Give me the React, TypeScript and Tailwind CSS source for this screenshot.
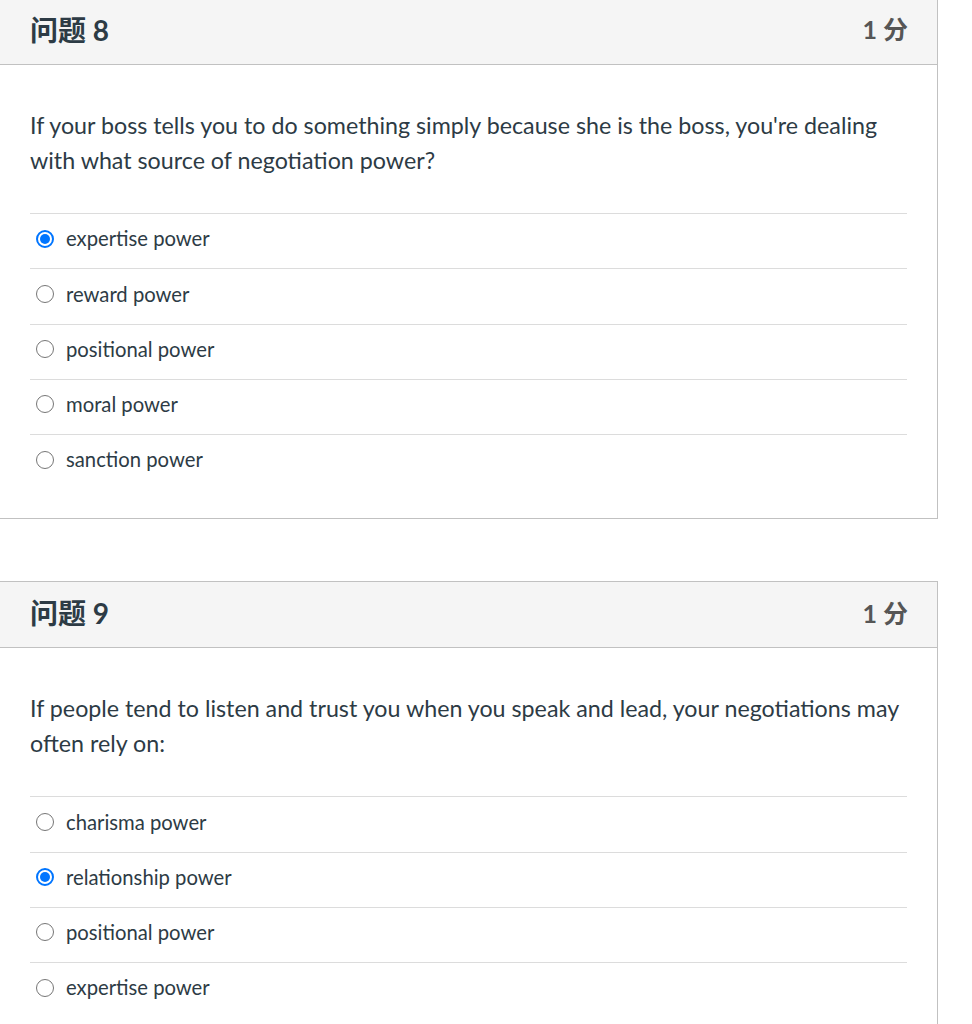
import React from 'react';

// Datos de las preguntas (tal como aparecen en la captura)
const questions = [
  {
    id: 8,
    points: '1 分',
    text: "If your boss tells you to do something simply because she is the boss, you're dealing with what source of negotiation power?",
    answers: ['expertise power', 'reward power', 'positional power', 'moral power', 'sanction power'],
    selected: 0,
  },
  {
    id: 9,
    points: '1 分',
    text: 'If people tend to listen and trust you when you speak and lead, your negotiations may often rely on:',
    answers: ['charisma power', 'relationship power', 'positional power', 'expertise power'],
    selected: 1,
  },
];

function Radio({ checked }: { checked: boolean }) {
  if (checked) {
    return (
      <span className="flex h-[18px] w-[18px] shrink-0 items-center justify-center rounded-full border-2 border-[#0075ff] bg-white">
        <span className="h-[10px] w-[10px] rounded-full bg-[#0075ff]" />
      </span>
    );
  }
  return <span className="h-[18px] w-[18px] shrink-0 rounded-full border-[1.5px] border-[#767676] bg-white" />;
}

function QuestionCard({ q, className }: { q: (typeof questions)[number]; className?: string }) {
  return (
    <div className={`border border-[#c1c1c1] bg-white ${className ?? ''}`}>
      {/* Cabecera */}
      <div className="flex h-[66px] items-center justify-between border-b border-[#c1c1c1] bg-[#f5f5f5] pb-[3px] pl-[30px] pr-[29px]">
        <span className="text-[28px] font-bold text-[#2d3b45]">问题 {q.id}</span>
        <span className="text-[25px] font-bold text-[#565656]">{q.points}</span>
      </div>

      {/* Cuerpo */}
      <div className="px-[30px] pb-[29px] pt-[43px]">
        <p className="text-[23.25px] leading-[34.5px] text-[#2d3b45]">{q.text}</p>
        <div className="mt-[36px]">
          {q.answers.map((a, i) => (
            <div key={a} className="flex h-[55.25px] items-center gap-[12px] border-t border-[#dcdcdc] pb-[5px] pl-[6px]">
              <Radio checked={i === q.selected} />
              <span className="text-[20.25px] text-[#2d3b45]">{a}</span>
            </div>
          ))}
        </div>
      </div>
    </div>
  );
}

export default function App() {
  return (
    <div className="min-h-screen bg-white font-['Lato','Noto_Sans_CJK_SC',sans-serif]">
      <div className="-ml-px -mt-[2px] w-[939px]">
        <QuestionCard q={questions[0]} />
        <QuestionCard q={questions[1]} className="mt-[62px]" />
      </div>
    </div>
  );
}
